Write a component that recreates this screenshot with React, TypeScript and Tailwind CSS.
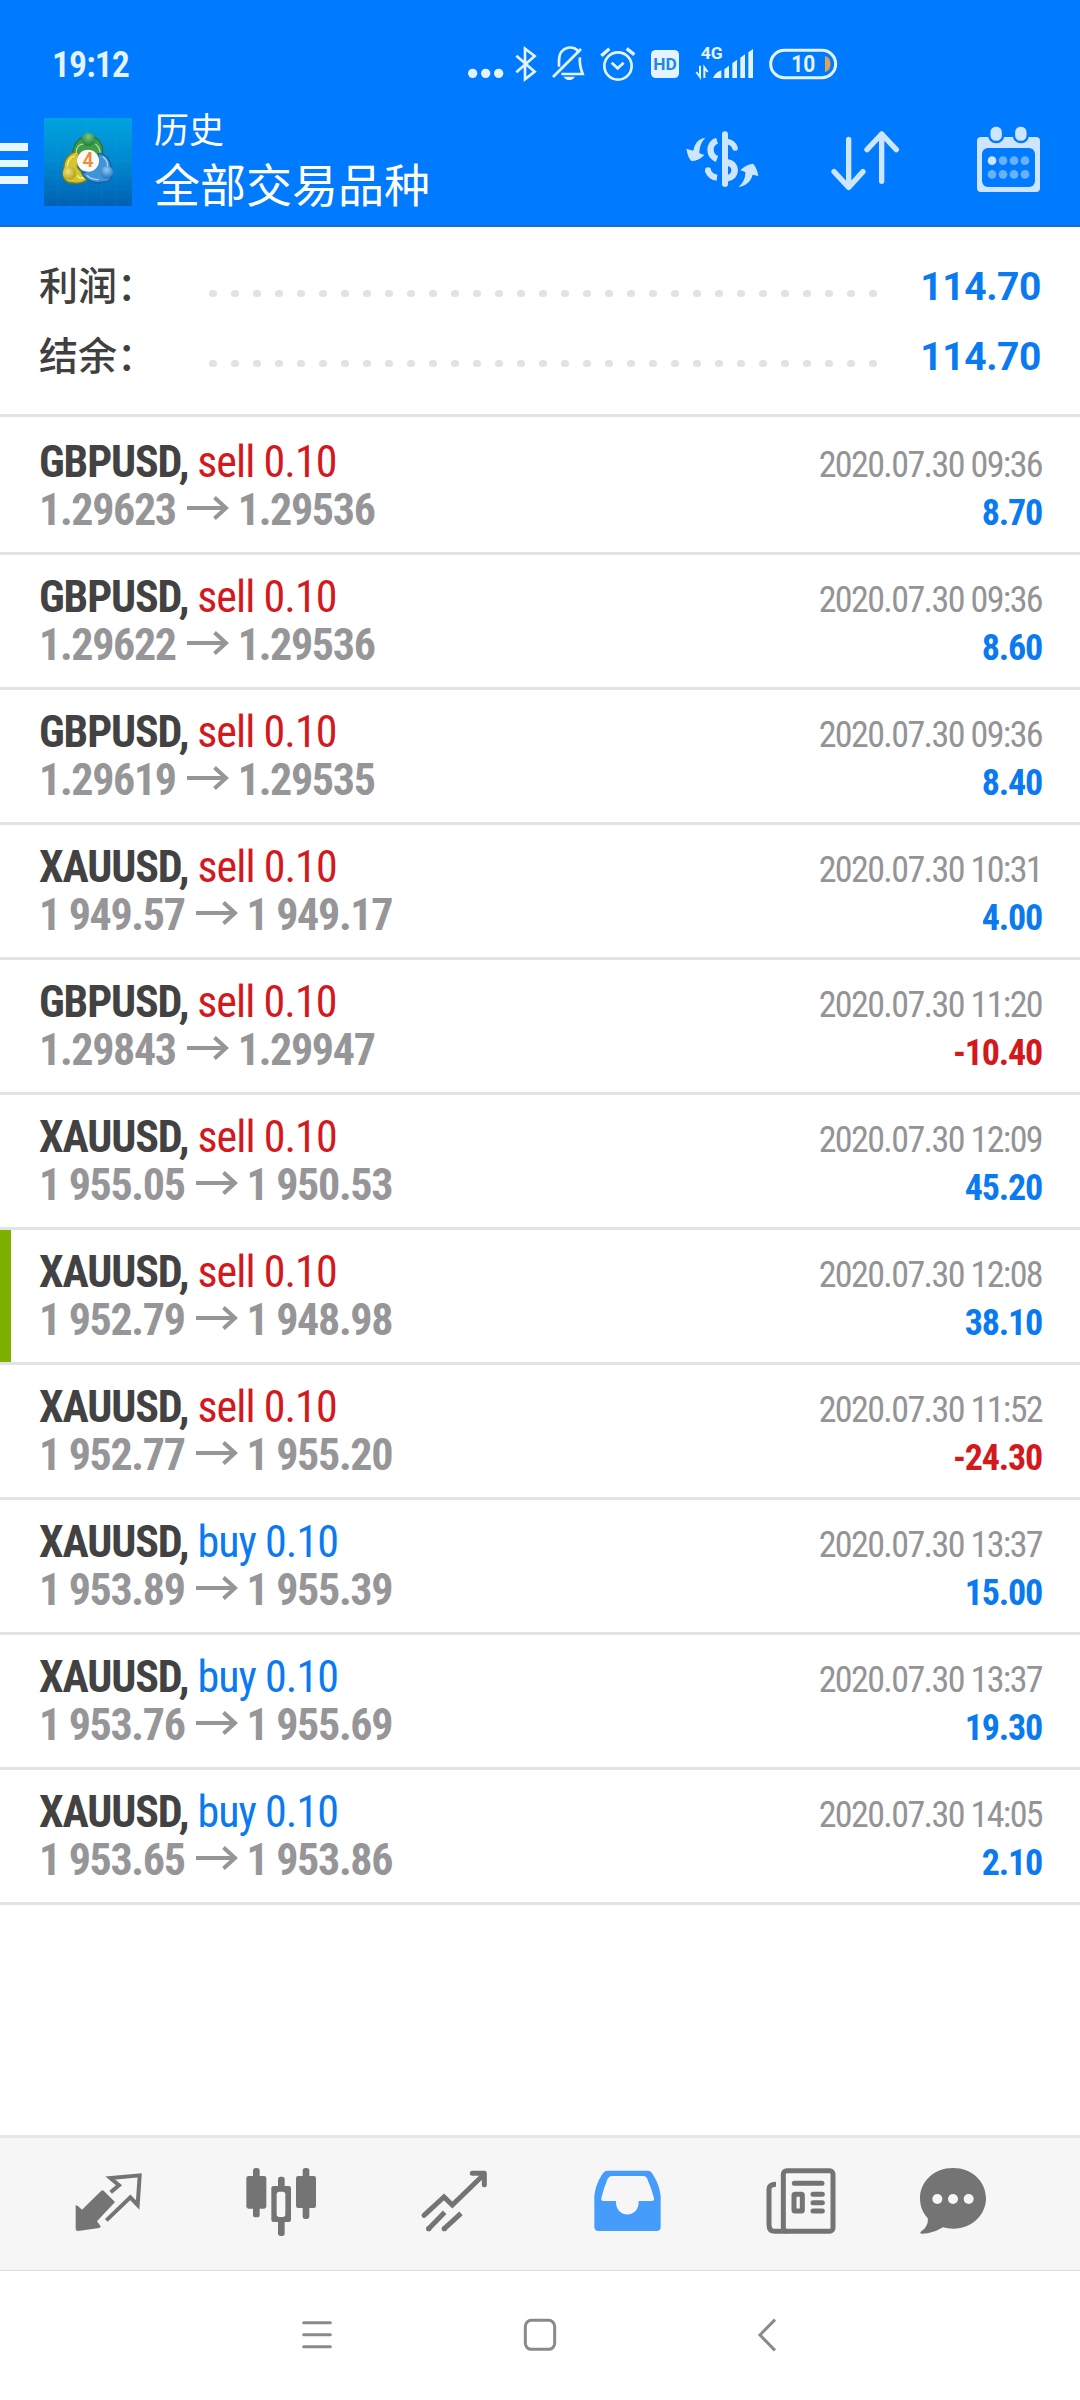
interface Deal {
  symbol: string
  side: "sell" | "buy"
  volume: string
  open: string
  close: string
  time: string
  profit: string
  marked?: boolean
}

const deals: Deal[] = [
  { symbol: "GBPUSD", side: "sell", volume: "0.10", open: "1.29623", close: "1.29536", time: "2020.07.30 09:36", profit: "8.70" },
  { symbol: "GBPUSD", side: "sell", volume: "0.10", open: "1.29622", close: "1.29536", time: "2020.07.30 09:36", profit: "8.60" },
  { symbol: "GBPUSD", side: "sell", volume: "0.10", open: "1.29619", close: "1.29535", time: "2020.07.30 09:36", profit: "8.40" },
  { symbol: "XAUUSD", side: "sell", volume: "0.10", open: "1 949.57", close: "1 949.17", time: "2020.07.30 10:31", profit: "4.00" },
  { symbol: "GBPUSD", side: "sell", volume: "0.10", open: "1.29843", close: "1.29947", time: "2020.07.30 11:20", profit: "-10.40" },
  { symbol: "XAUUSD", side: "sell", volume: "0.10", open: "1 955.05", close: "1 950.53", time: "2020.07.30 12:09", profit: "45.20" },
  { symbol: "XAUUSD", side: "sell", volume: "0.10", open: "1 952.79", close: "1 948.98", time: "2020.07.30 12:08", profit: "38.10", marked: true },
  { symbol: "XAUUSD", side: "sell", volume: "0.10", open: "1 952.77", close: "1 955.20", time: "2020.07.30 11:52", profit: "-24.30" },
  { symbol: "XAUUSD", side: "buy", volume: "0.10", open: "1 953.89", close: "1 955.39", time: "2020.07.30 13:37", profit: "15.00" },
  { symbol: "XAUUSD", side: "buy", volume: "0.10", open: "1 953.76", close: "1 955.69", time: "2020.07.30 13:37", profit: "19.30" },
  { symbol: "XAUUSD", side: "buy", volume: "0.10", open: "1 953.65", close: "1 953.86", time: "2020.07.30 14:05", profit: "2.10" },
]

function StatusBar() {
  return (
    <div className="flex h-[100px] items-start pl-[52px] text-[#e3f4ff]">
      <span className="mt-[45px] w-[415px] text-[36px] leading-[40px] font-semibold tracking-[-1px] font-stretch-semi-condensed">
        19:12
      </span>
      <div className="mt-[45px] flex">
        <svg className="h-[40px] w-[37px]" viewBox="81 75 111 120" fill="currentColor">
          <circle cx="98" cy="160" r="14" />
          <circle cx="137" cy="160" r="14" />
          <circle cx="176" cy="160" r="14" />
        </svg>
        <svg className="ml-[10px] h-[40px] w-[24px]" viewBox="222 75 72 120" fill="none" stroke="currentColor" strokeWidth="8">
          <path d="M229 107 L284 155 L255 178 V86 L284 108 L229 157" />
        </svg>
        <svg className="ml-[13px] h-[40px] w-[35px]" viewBox="333 75 105 120" fill="none" stroke="currentColor" strokeWidth="8">
          <path d="M357 140 V122 C357 75 408 74 416 98 M420 112 C417 134 424 150 428 162 H364" />
          <path d="M339 171 L423 87" />
          <path d="M370 170 H405 C400 177 395 180 388 180 C381 180 375 177 370 170Z" fill="currentColor" stroke="none" />
        </svg>
        <svg className="ml-[13px] h-[40px] w-[37px]" viewBox="477 75 111 120" fill="none" stroke="currentColor" strokeWidth="8">
          <circle cx="534" cy="138" r="41" />
          <path d="M515 128 L533 145 L551 128" />
          <path d="M484 107 L508 86 M560 86 L583 104" strokeWidth="10" />
        </svg>
        <svg className="ml-[14px] h-[40px] w-[30px]" viewBox="630 75 90 120">
          <rect x="633" y="90" width="84" height="84" rx="14" fill="currentColor" />
          <text x="675" y="151" fontSize="52" fontWeight="700" fill="#1f86ee" textAnchor="middle" textLength="70">
            HD
          </text>
        </svg>
        <svg className="ml-[15px] h-[40px] w-[60px]" viewBox="765 75 180 120" fill="currentColor">
          <text x="782" y="117" fontSize="50" fontWeight="700" textLength="66" lengthAdjust="spacingAndGlyphs">
            4G
          </text>
          <path d="M819 174 C824 162 833 155 844 151 V174Z M853 174 V148 L867 137 V174Z M877 174 V130 L891 119 V174Z M901 174 V113 L915 103 V174Z M925 174 V97 L939 87 V174Z" />
          <path d="M780 137 V171 L769 156 M793 174 V142 L803 156" fill="none" stroke="currentColor" strokeWidth="6" />
        </svg>
        <svg className="ml-[13px] h-[40px] w-[70px]" viewBox="984 75 210 120">
          <rect x="992" y="91" width="195" height="82" rx="41" fill="none" stroke="currentColor" strokeWidth="9" />
          <path d="M1155 108 C1177 112 1177 152 1155 156Z" fill="#dda05f" />
          <text x="1090" y="157" fontSize="69" fontWeight="700" fill="currentColor" textAnchor="middle" textLength="72" lengthAdjust="spacingAndGlyphs">
            10
          </text>
        </svg>
      </div>
    </div>
  )
}

function AppLogo() {
  return (
    <svg className="mt-[18px] ml-4 size-[88px]" viewBox="12 12 264 264">
      <defs>
        <linearGradient id="sky" x1="0" y1="0" x2="0" y2="1">
          <stop offset="0" stopColor="#00a3df" />
          <stop offset="0.5" stopColor="#0088cf" />
          <stop offset="1" stopColor="#0060b4" />
        </linearGradient>
        <radialGradient id="green" cx="0.5" cy="0.3" r="0.7">
          <stop offset="0" stopColor="#7cc97b" />
          <stop offset="1" stopColor="#1f7a38" />
        </radialGradient>
        <radialGradient id="gold" cx="0.4" cy="0.4" r="0.7">
          <stop offset="0" stopColor="#f3e27a" />
          <stop offset="1" stopColor="#a99a17" />
        </radialGradient>
        <radialGradient id="azure" cx="0.5" cy="0.3" r="0.7">
          <stop offset="0" stopColor="#8fcbf5" />
          <stop offset="1" stopColor="#1f74be" />
        </radialGradient>
      </defs>
      <rect x="12" y="12" width="264" height="264" fill="url(#sky)" />
      <path
        d="M52 12V276 M96 12V276 M140 12V276 M184 12V276 M228 12V276 M12 52H276 M12 96H276 M12 140H276 M12 184H276 M12 228H276"
        stroke="#4fc3ef"
        strokeOpacity="0.12"
        strokeWidth="2"
      />
      {/* three linked figures around the badge */}
      <g strokeWidth="4" strokeLinejoin="round">
        <path d="M99 128 C96 96 112 76 130 70 H164 C184 80 192 104 186 130 L165 148 L118 124Z" fill="#3f9c48" stroke="#2d6d3c" />
        <path d="M116 114 C86 112 68 142 72 172 C62 188 78 208 96 206 C116 210 132 206 142 196 L112 160Z" fill="#d3c52c" stroke="#7b7c20" />
        <path d="M176 118 C202 122 214 142 212 168 C222 186 208 206 188 204 C162 212 134 196 126 178 L166 160Z" fill="#3f93d6" stroke="#1b5d9e" />
      </g>
      <path d="M108 120 C108 100 118 90 130 90 M166 90 C176 98 180 108 180 116" fill="none" stroke="#a7dda1" strokeWidth="4" />
      <path d="M104 126 C88 132 82 146 82 158 M112 184 C116 192 124 194 132 192" fill="none" stroke="#f7eda2" strokeWidth="4" />
      <path d="M188 128 C200 136 204 148 202 160 M140 184 C154 196 166 198 176 196" fill="none" stroke="#a5d6fa" strokeWidth="4" />
      <circle cx="145" cy="76" r="20" fill="url(#green)" />
      <circle cx="88" cy="177" r="20" fill="url(#gold)" />
      <circle cx="200" cy="175" r="19" fill="url(#azure)" />
      <circle cx="144" cy="140" r="33" fill="#fdfaf6" />
      <text x="144" y="160" fontSize="58" fontWeight="600" fill="#f08a3c" textAnchor="middle">
        4
      </text>
    </svg>
  )
}

function Header() {
  return (
    <div className="flex h-[127px] items-start border-b-2 border-[#1a6cc9] text-[#cde6fd]">
      <div className="mt-[43px] flex w-[28px] flex-col gap-[9px]">
        <div className="h-[7.5px] bg-[#e8f6ff]" />
        <div className="h-[7.5px] bg-[#e8f6ff]" />
        <div className="h-[7.5px] bg-[#e8f6ff]" />
      </div>
      <AppLogo />
      <div className="mt-[8px] ml-[22px] flex-1 font-['Roboto','Noto_Sans_CJK_SC',sans-serif] text-white">
        <p className="text-[35px] leading-[48px]">历史</p>
        <p className="text-[46px] leading-[60px]">全部交易品种</p>
      </div>
      <div className="mt-[28px] mr-[39px] flex">
        <svg className="h-[64px] w-[76px]" viewBox="72 84 228 192" fill="none" stroke="currentColor">
          <path d="M171 122 C145 130 145 167 171 177" strokeWidth="19" />
          <path d="M143 210 C147 222 156 231 171 233" strokeWidth="18" />
          <circle cx="144" cy="211" r="9" fill="currentColor" stroke="none" />
          <path d="M195 103 V252" strokeWidth="18" strokeLinecap="round" />
          <path d="M200 125 C213 126 223 134 225 144" strokeWidth="17" strokeLinecap="round" />
          <path d="M200 187 C232 190 232 231 200 235" strokeWidth="20" />
          <path d="M136 113 C118 115 104 128 100 152 L79 146 Q84 174 94 183 Q116 183 133 165 L118 160 C118 140 124 126 136 113Z" fill="currentColor" stroke="none" />
          <path d="M236 261 C258 256 272 246 278 224 L295 228 Q290 200 279 191 Q258 193 241 211 L256 216 C256 235 250 248 236 261Z" fill="currentColor" stroke="none" />
        </svg>
        <svg className="ml-[70px] h-[64px] w-[70px]" viewBox="510 84 210 192" fill="none" stroke="currentColor" strokeWidth="16" strokeLinecap="round" strokeLinejoin="round">
          <path d="M566 118 V262 M522 215 L566 262 L609 215" />
          <path d="M665 244 V102 M621 149 L665 102 L709 149" />
        </svg>
        <svg className="-mt-[3px] ml-[76px] h-[68px] w-[65px]" viewBox="948 75 195 204" fill="currentColor">
          <rect x="951" y="111" width="189" height="165" rx="12" />
          <rect x="966" y="144" width="159" height="117" rx="18" fill="#007aff" />
          <g stroke="#007aff" strokeWidth="7">
            <rect x="988" y="77" width="41" height="49" rx="19" />
            <rect x="1062" y="77" width="41" height="49" rx="19" />
          </g>
          <circle cx="996" cy="182" r="13" />
          <g fill="#69b1ff">
            <circle cx="1029" cy="182" r="13" />
            <circle cx="1062" cy="182" r="13" />
            <circle cx="1095" cy="182" r="13" />
            <circle cx="996" cy="223" r="13" />
            <circle cx="1029" cy="223" r="13" />
            <circle cx="1062" cy="223" r="13" />
            <circle cx="1095" cy="223" r="13" />
          </g>
        </svg>
      </div>
    </div>
  )
}

function SummaryRow({ label, value }: { label: string; value: string }) {
  return (
    <div className="flex h-[70px] items-center pr-[39px] pl-[39px]">
      <span className="w-[170px] pb-[4px] font-['Noto_Sans_CJK_SC',sans-serif] text-[39px] leading-[60px] font-medium text-[#404040]">
        {label}
      </span>
      <div className="mt-[17px] flex w-[668px] justify-between">
        {Array.from({ length: 31 }, (_, i) => (
          <span key={i} className="size-[7.5px] rounded-full bg-[#e2e2e2]" />
        ))}
      </div>
      <span className="flex-1 pt-[3px] text-right text-[39px] leading-[60px] font-bold tracking-[-0.4px] text-[#0a7af0]">{value}</span>
    </div>
  )
}

function DealRow({ deal }: { deal: Deal }) {
  const sideColor = deal.side === "sell" ? "text-[#d3191e]" : "text-[#0a7af0]"
  const profitColor = deal.profit.startsWith("-") ? "text-[#d3191e]" : "text-[#0a7af0]"

  return (
    <div className="flex h-[135px] border-b-3 border-[#e3e3e3] font-stretch-condensed">
      <div className={deal.marked ? "w-[11px] bg-[#7fb000]" : "w-[11px]"} />
      <div className="flex-1 pt-[18px] pr-[38px] pl-[28px] leading-[48px]">
        <div className="flex h-[48px] items-baseline justify-between">
          <p className="text-[44px] leading-[48px] tracking-[-1.15px]">
            <span className="font-bold text-[#424242]">{deal.symbol},</span>{" "}
            <span className={`tracking-[-0.95px] ${sideColor}`}>
              {deal.side} {deal.volume}
            </span>
          </p>
          <p className="text-[36px] leading-[48px] tracking-[-1.6px] text-[#949496]">{deal.time}</p>
        </div>
        <div className="flex h-[48px] items-baseline justify-between">
          <p className="flex items-baseline text-[44px] leading-[48px] font-bold tracking-[-1.35px] text-[#969698]">
            {deal.open}
            <svg className="mr-[9px] ml-[11px] h-[34px] w-[42px]" viewBox="0 0 42 34" fill="none" stroke="currentColor" strokeWidth="4">
              <path d="M0 17 H39 M27.5 6.5 L39 17 L27.5 27.5" />
            </svg>
            {deal.close}
          </p>
          <p className={`text-[36px] leading-[48px] font-bold tracking-[-1.2px] ${profitColor}`}>{deal.profit}</p>
        </div>
      </div>
    </div>
  )
}

function TabBar() {
  return (
    <div className="flex h-[136px] items-start border-t-3 border-b border-t-[#e6e6e6] border-b-[#dedede] bg-[#f6f6f6] pt-[27px] pl-[74px] text-[#747474]">
      {/* quotes */}
      <svg className="h-[74px] w-[70px]" viewBox="222 135 210 222">
        <path d="M227 256 Q230 254 246 269 L304 212 Q307 209 311 212 L345 246 L291 304 L302 319 Q302 323 297 324 L234 333 Q228 333 227 328Z" fill="currentColor" />
        <path d="M332 217 L357 196 L331 174 L419 166 L413 255 L391 232 L319 301" fill="none" stroke="currentColor" strokeWidth="12" />
      </svg>
      {/* charts */}
      <svg className="ml-[101px] h-[74px] w-[72px]" viewBox="735 135 216 222" fill="currentColor">
        <rect x="759" y="144" width="20" height="148" rx="8" />
        <rect x="739" y="168" width="60" height="98" rx="7" />
        <rect x="908" y="144" width="20" height="153" rx="8" />
        <rect x="888" y="168" width="60" height="96" rx="7" />
        <rect x="834" y="170" width="20" height="178" rx="8" />
        <rect x="814" y="198" width="59" height="108" rx="7" />
        <rect x="830" y="215" width="26" height="76" rx="8" fill="#f6f6f6" />
      </svg>
      {/* trade */}
      <svg className="ml-[103px] h-[74px] w-[70px]" viewBox="180 135 210 222" fill="none" stroke="currentColor" strokeWidth="15">
        <path d="M192 286 L252 231 L277 255 L367 168" strokeLinecap="round" />
        <path d="M337 160 H373 V194" strokeLinecap="round" strokeLinejoin="round" />
        <path d="M359 160 L373 160 L373 176Z" fill="currentColor" strokeWidth="8" />
        <path d="M254 277 L206 326 M303 280 L253 326" />
        <g fill="currentColor" stroke="none">
          <circle cx="206" cy="326" r="8" />
          <circle cx="253" cy="326" r="8" />
        </g>
      </svg>
      {/* history */}
      <svg className="ml-[103px] h-[74px] w-[70px]" viewBox="699 135 210 222">
        <path d="M742 152 H864 Q871 152 875 158 C889 178 899 200 902 228 V320 Q902 333 889 333 H716 Q703 333 703 320 V228 C706 200 716 178 730 158 Q735 152 742 152Z" fill="#459cfb" />
        <path d="M755 168 H850 Q858 168 861 175 Q874 205 882 234 Q884 243 875 243 H836 C838 297 766 297 768 243 H731 Q722 243 724 234 Q731 205 743 176 Q747 168 755 168Z" fill="#f6f6f6" />
      </svg>
      {/* news */}
      <svg className="ml-[102px] h-[74px] w-[72px]" viewBox="135 135 216 222" fill="none" stroke="currentColor" strokeWidth="15">
        <rect x="190" y="152" width="149" height="182" rx="10" />
        <path d="M168 193 Q147 193 147 208 V314 Q147 334 165 334 H200" />
        <path d="M223 190 H306 M279 223 H307 M279 248 H307 M279 273 H307" strokeLinecap="round" />
        <rect x="222" y="223" width="25" height="50" rx="3" />
      </svg>
      {/* messages */}
      <svg className="ml-[82px] h-[74px] w-[68px]" viewBox="597 135 204 222">
        <path d="M699 144 C755 144 798 184 798 235 C798 286 754 327 699 326 Q684 326 669 322 C650 334 625 342 604 341 Q598 339 604 334 C618 325 626 308 623 294 C608 279 600 258 600 235 C600 184 643 144 699 144Z" fill="currentColor" />
        <g fill="#f6f6f6">
          <circle cx="652" cy="237" r="15" />
          <circle cx="699" cy="237" r="15" />
          <circle cx="746" cy="237" r="15" />
        </g>
      </svg>
    </div>
  )
}

function SystemNav() {
  return (
    <div className="flex h-[129px] items-start pt-[44px] pl-[300px] text-[#8a8a8a]">
      <svg className="h-[40px] w-[34px]" viewBox="900 585 102 120" stroke="currentColor" strokeWidth="9" strokeLinecap="round">
        <path d="M911 608 H991 M911 644 H991 M911 680 H991" />
      </svg>
      <svg className="ml-[188px] h-[40px] w-[36px]" viewBox="486 585 108 120" fill="none" stroke="currentColor" strokeWidth="9">
        <rect x="496" y="601" width="88" height="87" rx="18" />
      </svg>
      <svg className="ml-[198px] h-[40px] w-[22px]" viewBox="108 585 66 120" fill="none" stroke="currentColor" strokeWidth="9">
        <path d="M165 599 L120 645 L165 691" />
      </svg>
    </div>
  )
}

export default function App() {
  return (
    <div className="flex h-[2400px] w-[1080px] flex-col overflow-hidden bg-white font-['Roboto','Noto_Sans_CJK_SC',sans-serif]">
      <div className="bg-[#007aff]">
        <StatusBar />
        <Header />
      </div>
      <div className="h-[190px] border-b-3 border-[#e3e3e3] pt-[23px]">
        <SummaryRow label="利润：" value="114.70" />
        <SummaryRow label="结余：" value="114.70" />
      </div>
      <div className="flex-1 pt-[3px]">
        {deals.map((deal, i) => (
          <DealRow key={i} deal={deal} />
        ))}
      </div>
      <TabBar />
      <SystemNav />
    </div>
  )
}
